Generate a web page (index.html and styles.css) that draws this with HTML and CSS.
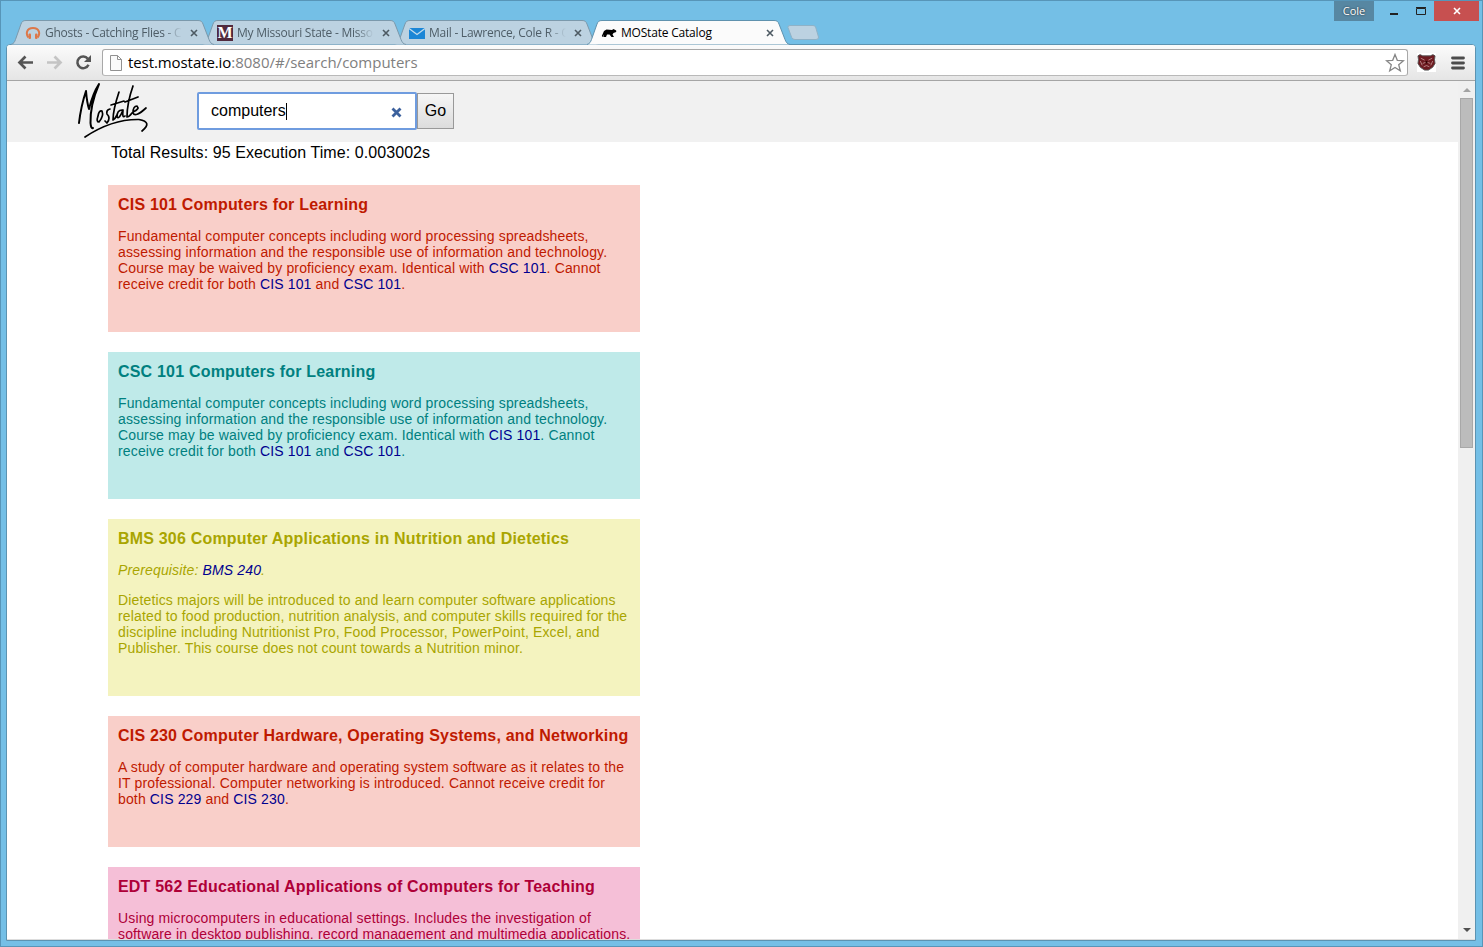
FILE: index.html
```html
<!DOCTYPE html>
<html lang="en">
<head>
<meta charset="utf-8">
<title>MOState Catalog</title>
<link rel="stylesheet" href="styles.css">
</head>
<body>
<div class="window">
  <div class="titlebar">
    <div class="tabs">
      <div class="tab tab-first">
        <svg class="tab-shape" viewBox="0 0 204 25"><path d="M0 24.5C3 23.5 3.5 22 4.5 19.5L10 4C11 1.5 12 .5 15 .5H187C190 .5 191 1.5 192 4L198 19.5C199 22 200 24 203 24.5"/></svg>
        <svg class="favicon" viewBox="0 0 16 16"><path d="M3.5 12.500C.5 9 1.500 3 8 3S15.500 9 12.500 12.500" fill="none" stroke="#dd7748" stroke-width="2"/><rect x="3.500" y="8.500" width="2.500" height="5.500" rx="1" fill="#dd7748"/><rect x="10" y="8.500" width="2.500" height="5.500" rx="1" fill="#dd7748"/></svg>
        <span class="tab-label fade">Ghosts - Catching Flies - C</span>
        <svg class="tab-close" viewBox="0 0 8 8"><path d="M1 1L7 7M7 1L1 7"/></svg>
      </div>
      <div class="tab tab-second">
        <svg class="tab-shape" viewBox="0 0 204 25"><path d="M0 24.5C3 23.5 3.5 22 4.5 19.5L10 4C11 1.5 12 .5 15 .5H187C190 .5 191 1.5 192 4L198 19.5C199 22 200 24 203 24.5"/></svg>
        <span class="favicon m-icon">M</span>
        <span class="tab-label fade">My Missouri State - Misso</span>
        <svg class="tab-close" viewBox="0 0 8 8"><path d="M1 1L7 7M7 1L1 7"/></svg>
      </div>
      <div class="tab tab-third">
        <svg class="tab-shape" viewBox="0 0 204 25"><path d="M0 24.5C3 23.5 3.5 22 4.5 19.5L10 4C11 1.5 12 .5 15 .5H187C190 .5 191 1.5 192 4L198 19.5C199 22 200 24 203 24.5"/></svg>
        <svg class="favicon" viewBox="0 0 16 16"><rect y="3" width="16" height="11" fill="#1b86d6"/><path d="M0 3.5L8 9.5L16 3.5" fill="none" stroke="#c3dcec" stroke-width="1.300"/></svg>
        <span class="tab-label fade">Mail - Lawrence, Cole R - O</span>
        <svg class="tab-close" viewBox="0 0 8 8"><path d="M1 1L7 7M7 1L1 7"/></svg>
      </div>
      <div class="tab tab-active">
        <svg class="tab-shape" viewBox="0 0 204 25"><path d="M0 24.5C3 23.5 3.5 22 4.5 19.5L10 4C11 1.5 12 .5 15 .5H187C190 .5 191 1.5 192 4L198 19.5C199 22 200 24 203 24.5"/></svg>
        <svg class="favicon" viewBox="0 0 16 16"><path d="M.8 11L3 6L5.500 4.500L11 5L12.500 4L15.200 5.500V7L12.500 8L11.500 9.500L13 12H10.500L8.500 9.500H6L5 12H2.300L3 9.500L1.500 12Z" fill="#000"/></svg>
        <span class="tab-label">MOState Catalog</span>
        <svg class="tab-close" viewBox="0 0 8 8"><path d="M1 1L7 7M7 1L1 7"/></svg>
      </div>
      <svg class="new-tab" viewBox="0 0 32 16"><path d="M3 .5H26Q28 .5 28.600 2L31.500 12Q32 14.500 29 14.500H8Q5.500 14.500 4.700 12.500L1 2.500Q.5 .5 3 .5Z"/></svg>
    </div>
    <div class="controls">
      <span class="profile">Cole</span>
      <svg class="win-buttons" viewBox="0 0 60 20"><rect x="16" y="12" width="8" height="2" fill="#222"/><path d="M42.500 7.500h9v6h-9z" fill="none" stroke="#222"/><path d="M42 6.500h10" stroke="#222"/></svg>
      <span class="win-close"><svg viewBox="0 0 8 8"><path d="M1 1L7 7M7 1L1 7" stroke="#fff" stroke-width="1.600"/></svg></span>
    </div>
  </div>
  <div class="frame">
    <div class="toolbar">
      <svg class="nav-icons" viewBox="0 0 90 36"><path d="M26 17.500H13M18.500 11.500L12.500 17.500L18.500 23.500" fill="none" stroke="#555" stroke-width="2.700"/><path d="M40 17.500H53M47.500 11.500L53.500 17.500L47.500 23.500" fill="none" stroke="#c4c4c4" stroke-width="2.700"/><path d="M80.800 13.800A5.800 5.800 0 1 0 81.500 19.700" fill="none" stroke="#555" stroke-width="2.500"/><path d="M84 10V17H77Z" fill="#555"/></svg>
      <div class="address">
        <svg class="page-icon" viewBox="0 0 12 16"><path d="M.5 .5H7.5L11.5 4.5V15.5H.5ZM7.5 .5V4.5H11.5" fill="#fafafa" stroke="#919191"/></svg>
        <span class="url"><b>test.mostate.io</b>:8080/#/search/computers</span>
        <svg class="star" viewBox="0 0 20 20"><path d="M10 1.500L12.300 7.300L18.500 7.700L13.700 11.700L15.300 17.800L10 14.500L4.700 17.800L6.300 11.700L1.500 7.700L7.700 7.300Z"/></svg>
      </div>
      <svg class="bear" viewBox="0 0 20 20"><rect width="20" height="20" fill="#fff"/><path d="M1 3Q3 .5 6 3H14Q17 .5 19 3L18.500 7L19 11L16.500 15L12 18H8L3.500 15L1 11L1.500 7Z" fill="#6d1a20" stroke="#555"/><path d="M4 5.500L8 7.500M16 5.500L12 7.500M6 11Q10 8 14 11M7 14.500Q10 12 13 14.500M3.500 8.500L5.500 13M16.500 8.500L14.500 13" stroke="#c08f8f" stroke-width=".9" fill="none"/><path d="M9 8.500H11V11H9Z" fill="#300"/></svg>
      <svg class="menu" viewBox="0 0 14 14"><path d="M1.500 2H12.500M1.500 7H12.500M1.500 12H12.500" stroke="#4c4c4c" stroke-width="2.800" stroke-linecap="round"/></svg>
    </div>
    <div class="viewport">
      <main class="page">
        <header class="site-header">
          <svg class="logo" viewBox="0 0 76 60"><path d="M2 42Q4 25 9 10Q10 22 12 28Q16 12 22 3Q13 24 13.500 42Q14 48 16 47" stroke-width="2"/><path d="M21 35Q19 41 22 41Q27 35 25 30Q22 29 21 35M33 28Q29 29 30 33Q34 37 30 42L28 40M42 11Q36 29 36 39Q38 38 40 34M34 24L47 20M45 29Q40 29 40 36Q42 39 46 29Q45 38 48 35M56 5Q50 22 50 36Q52 36 55 32M48 21L61 16M56 31Q63 28 60 25Q56 25 56 32Q58 37 69 27M8 56Q35 38 62 38.500Q76 41 65 50" stroke-width="1.700"/></svg>
          <div class="search">
            <div class="search-box"><span class="query">computers</span><i class="caret"></i><svg class="clear" viewBox="0 0 11 11"><path d="M1.500 1.500L9.500 9.500M9.500 1.500L1.500 9.500"/></svg></div>
            <button class="go">Go</button>
          </div>
        </header>
        <p class="stats">Total Results: 95 Execution Time: 0.003002s</p>
        <section class="results">
          <article class="card red">
            <h2>CIS 101 Computers for Learning</h2>
            <p>Fundamental computer concepts including word processing spreadsheets,<br>assessing information and the responsible use of information and technology.<br>Course may be waived by proficiency exam. Identical with <a>CSC 101</a>. Cannot<br>receive credit for both <a>CIS 101</a> and <a>CSC 101</a>.</p>
          </article>
          <article class="card teal">
            <h2>CSC 101 Computers for Learning</h2>
            <p>Fundamental computer concepts including word processing spreadsheets,<br>assessing information and the responsible use of information and technology.<br>Course may be waived by proficiency exam. Identical with <a>CIS 101</a>. Cannot<br>receive credit for both <a>CIS 101</a> and <a>CSC 101</a>.</p>
          </article>
          <article class="card yellow">
            <h2>BMS 306 Computer Applications in Nutrition and Dietetics</h2>
            <p class="prereq">Prerequisite: <a>BMS 240</a>.</p>
            <p>Dietetics majors will be introduced to and learn computer software applications<br>related to food production, nutrition analysis, and computer skills required for the<br>discipline including Nutritionist Pro, Food Processor, PowerPoint, Excel, and<br>Publisher. This course does not count towards a Nutrition minor.</p>
          </article>
          <article class="card red">
            <h2>CIS 230 Computer Hardware, Operating Systems, and Networking</h2>
            <p>A study of computer hardware and operating system software as it relates to the<br>IT professional. Computer networking is introduced. Cannot receive credit for<br>both <a>CIS 229</a> and <a>CIS 230</a>.</p>
          </article>
          <article class="card pink">
            <h2>EDT 562 Educational Applications of Computers for Teaching</h2>
            <p>Using microcomputers in educational settings. Includes the investigation of<br>software in desktop publishing, record management and multimedia applications.</p>
          </article>
        </section>
      </main>
      <div class="scrollbar"><i class="arrow up"></i><i class="thumb"></i><i class="arrow down"></i></div>
    </div>
  </div>
</div>
</body>
</html>
```
FILE: styles.css
```css
* { box-sizing: border-box; }
body { margin: 0; overflow: hidden; font-family: "Liberation Sans", Arial, sans-serif; color: #000; }
.window { width: 1483px; height: 947px; background: #74bfe6; border: 1px solid #5795b8; display: flex; flex-direction: column; padding: 0 6px 5px 5px; }
.titlebar { height: 43px; flex: none; display: flex; justify-content: space-between; align-items: flex-start; }
.tabs { display: flex; padding: 19px 0 0 5px; font: 12px "Open Sans", sans-serif; }
.tab { position: relative; width: 202px; height: 25px; margin-right: -10px; padding: 0 15px 0 14px; display: flex; align-items: center; color: #4e5d67; }
.tab-first { z-index: 3; }
.tab-second { z-index: 2; }
.tab-third { z-index: 1; }
.tab-active { z-index: 4; color: #000; }
.tab-shape { position: absolute; left: 0; top: 0; width: 204px; height: 25px; z-index: -1; fill: #bcd2e1; stroke: #7b99ac; }
.tab-active .tab-shape { fill: #fbfbfb; stroke: #5f92ae; }
.favicon { width: 16px; height: 16px; flex: none; }
.m-icon { background: #512a3e; color: #fff; font: bold 16px/16px "Liberation Serif", serif; text-align: center; }
.tab-label { flex: 1; margin-left: 4px; margin-right: 4px; white-space: pre; line-height: 18px; letter-spacing: -.25px; }
.tab-active .tab-label { letter-spacing: -.2px; }
.fade { -webkit-mask-image: linear-gradient(90deg, #000 84%, transparent 97%); mask-image: linear-gradient(90deg, #000 84%, transparent 97%); }
.tab-close { width: 8px; height: 8px; flex: none; stroke: #4d5a63; stroke-width: 1.6; }
.new-tab { width: 32px; height: 16px; margin: 5px 0 0 8px; fill: #bcd2e1; stroke: #8fb2c7; }
.controls { display: flex; height: 20px; margin-right: -3px; }
.profile { width: 40px; background: #5787a2; color: #fff; font: 11px/20px "Open Sans", sans-serif; text-align: center; text-shadow: 0 0 2px #222; }
.win-buttons { width: 60px; height: 20px; }
.win-close { width: 45px; background: #c75050; display: flex; align-items: center; justify-content: center; }
.win-close svg { width: 8px; height: 8px; }
.frame { flex: 1; min-height: 0; display: flex; flex-direction: column; border: 1px solid #5c93b1; border-radius: 4px 4px 0 0; overflow: hidden; background: #fff; }
.toolbar { height: 36px; flex: none; background: linear-gradient(#fbfbfb, #e5e5e5); border-bottom: 1px solid #a5a5a5; display: flex; align-items: center; padding-right: 10px; }
.nav-icons { width: 90px; height: 36px; margin-right: 5px; }
.address { flex: 1; height: 27px; border: 1px solid #a8a8a8; border-bottom-color: #b9b9b9; border-radius: 3px; background: #fff; display: flex; align-items: center; padding: 0 2px 0 7px; }
.page-icon { width: 12px; height: 16px; }
.url { flex: 1; margin-left: 6px; padding-bottom: 1px; font: 15px/24px "Open Sans", sans-serif; color: #808080; }
.url b { font-weight: 400; color: #000; letter-spacing: -.08px; }
.star { width: 20px; height: 20px; fill: #fff; stroke: #868686; stroke-width: 1.3; }
.bear { width: 19px; height: 19px; margin: 0 15px 0 9px; }
.menu { width: 14px; height: 14px; }
.viewport { flex: 1; min-height: 0; display: flex; border-bottom: 1px solid #ddd; }
.page { flex: 1; overflow: hidden; white-space: nowrap; }
.site-header { height: 61px; background: #f1f1f1; display: flex; padding-left: 70px; }
.logo { width: 76px; height: 60px; fill: none; stroke: #000; stroke-linecap: round; stroke-linejoin: round; }
.search { display: flex; align-items: flex-start; padding: 11px 0 0 44px; }
.search-box { width: 220px; height: 38px; border: 2px solid #6f9cdf; border-radius: 2px; background: #fff; display: flex; align-items: center; padding: 0 13px 0 12px; font-size: 16px; }
.caret { width: 1px; height: 17px; background: #000; }
.clear { width: 11px; height: 11px; margin: 3px 0 0 auto; stroke: #3c619d; stroke-width: 2.8; }
.go { width: 37px; height: 36px; margin-top: 1px; padding: 0 0 1px; border: 1px solid #999; background: linear-gradient(#f6f6f6, #dcdcdc); font: 16px "Liberation Sans", Arial, sans-serif; }
.stats { margin: 0 0 0 104px; font-size: 16px; line-height: 20px; padding-top: 1px; height: 43px; letter-spacing: .08px; }
.results { display: flex; flex-direction: column; gap: 20px; margin-left: 101px; width: 532px; }
.card { padding: 11px 10px 40px; }
.card h2 { margin: 0 0 14px; font-size: 16px; line-height: 18px; letter-spacing: .193px; }
.card p { margin: 0 0 14px; font-size: 14px; line-height: 16px; letter-spacing: .143px; }
.card p:last-child { margin-bottom: 0; }
.card .prereq { font-style: italic; }
.card a { color: #00008f; }
.red { background: #f9cfc9; color: #bf1a00; }
.teal { background: #bfeae9; color: #008080; }
.yellow { background: #f4f3bf; color: #a9a500; }
.pink { background: #f5bfd7; color: #ae0038; }
.scrollbar { width: 17px; background: #f0f0f0; display: flex; flex-direction: column; align-items: center; padding: 7px 0; }
.arrow { border: 4px solid transparent; width: 0; height: 0; }
.up { border-top: 0; border-bottom-color: #a3a3a3; margin-bottom: 6px; }
.down { border-bottom: 0; border-top-color: #505050; margin-top: auto; }
.thumb { width: 13px; height: 350px; background: #bcbcbc; border: 1px solid #a8a8a8; }
```
